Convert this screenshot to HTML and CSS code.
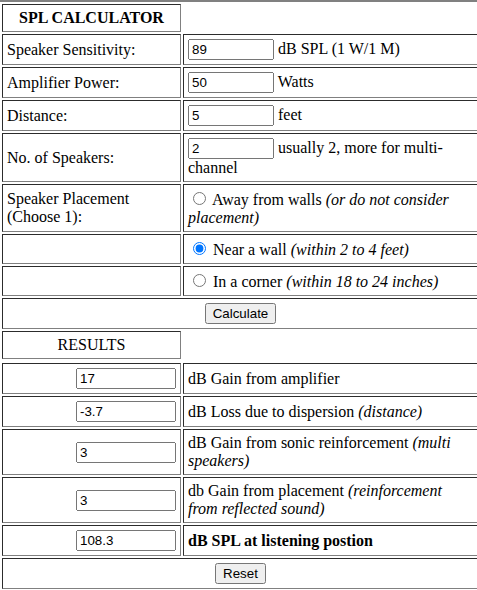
FILE: index.html
```html
<!DOCTYPE html>
<html>
<head>
<meta charset="utf-8">
<title>SPL Calculator</title>
<link rel="stylesheet" href="styles.css">
</head>
<body>
<table class="calc">
  <tr><td class="title">SPL CALCULATOR</td></tr>
  <tr>
    <td class="label">Speaker Sensitivity:</td>
    <td class="field"><input type="text" class="num" value="89"> dB SPL (1 W/1 M)</td>
  </tr>
  <tr>
    <td class="label">Amplifier Power:</td>
    <td class="field"><input type="text" class="num" value="50"> Watts</td>
  </tr>
  <tr>
    <td class="label">Distance:</td>
    <td class="field"><input type="text" class="num" value="5"> feet</td>
  </tr>
  <tr>
    <td class="label">No. of Speakers:</td>
    <td class="field"><input type="text" class="num" value="2"> usually 2, more for multi-channel</td>
  </tr>
  <tr>
    <td class="label">Speaker Placement (Choose 1):</td>
    <td class="field"><input type="radio" name="place"> Away from walls <i>(or do not consider placement)</i></td>
  </tr>
  <tr>
    <td class="label"></td>
    <td class="field"><input type="radio" name="place" checked> Near a wall <i>(within 2 to 4 feet)</i></td>
  </tr>
  <tr>
    <td class="label"></td>
    <td class="field"><input type="radio" name="place"> In a corner <i>(within 18 to 24 inches)</i></td>
  </tr>
  <tr><td class="center" colspan="2"><button type="button">Calculate</button></td></tr>
  <tr><td class="rhead">RESULTS</td></tr>
  <tr class="gap"></tr>
  <tr>
    <td class="out"><input type="text" class="res" value="17"></td>
    <td class="field">dB Gain from amplifier</td>
  </tr>
  <tr>
    <td class="out"><input type="text" class="res" value="-3.7"></td>
    <td class="field">dB Loss due to dispersion <i>(distance)</i></td>
  </tr>
  <tr>
    <td class="out"><input type="text" class="res" value="3"></td>
    <td class="field">dB Gain from sonic reinforcement <i>(multi speakers)</i></td>
  </tr>
  <tr>
    <td class="out"><input type="text" class="res" value="3"></td>
    <td class="field">db Gain from placement <i>(reinforcement from reflected sound)</i></td>
  </tr>
  <tr>
    <td class="out"><input type="text" class="res" value="108.3"></td>
    <td class="field"><b>dB SPL at listening postion</b></td>
  </tr>
  <tr><td class="center" colspan="2"><button type="button">Reset</button></td></tr>
</table>
</body>
</html>
```

FILE: styles.css
```css
html, body {
  margin: 0;
  padding: 0;
  overflow: hidden;
  background: #ffffff;
}

body {
  font-family: "Liberation Serif", "Times New Roman", serif;
  font-size: 16px;
  color: #000000;
}

.calc {
  border-collapse: separate;
  border-spacing: 2px;
  border-top: 2px solid #808080;
  border-bottom: 2px solid #808080;
  width: 481px;
  margin: 0;
}

.calc td {
  box-sizing: border-box;
  border: 1px inset gray;
  padding: 4px;
}

.calc td.label,
.calc td.title,
.calc td.rhead,
.calc td.out {
  width: 179px;
}

.title {
  text-align: center;
  font-weight: bold;
}

.rhead {
  text-align: center;
}

.out {
  text-align: right;
}

.center {
  text-align: center;
}

input[type="text"] {
  box-sizing: border-box;
  font-family: "Liberation Sans", Arial, sans-serif;
  font-size: 13.333px;
  margin: 0;
}

.num {
  width: 86px;
}

.res {
  width: 100px;
}

button {
  font-family: "Liberation Sans", Arial, sans-serif;
  font-size: 13.333px;
}
```
